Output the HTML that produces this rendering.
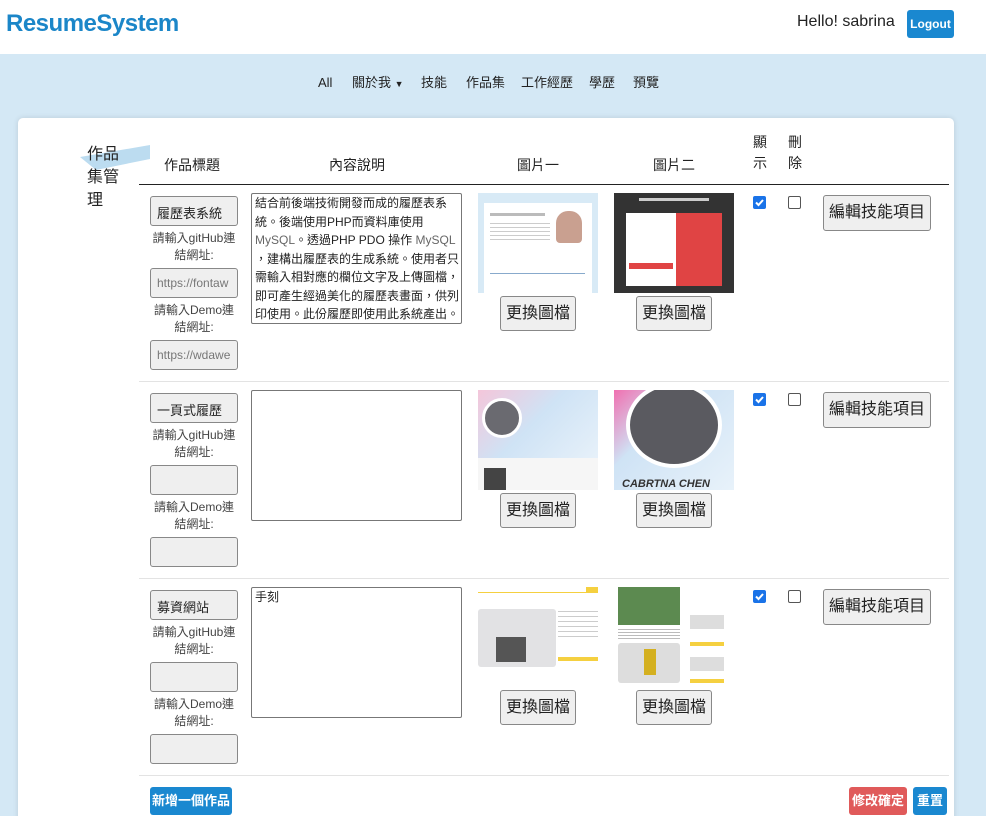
<!DOCTYPE html>
<html><head><meta charset="utf-8">
<style>
*{box-sizing:border-box;margin:0;padding:0}
html,body{width:986px;height:816px;overflow:hidden}
body{background:#d4e8f5;font-family:"Liberation Sans","Noto Sans CJK TC",sans-serif;position:relative;color:#222}
.a{position:absolute}
#hdr{left:0;top:0;width:986px;height:54px;background:#fff}
.logo{left:6px;top:10px;font-size:24px;line-height:28px;font-weight:bold;color:#1b86c8;letter-spacing:-0.5px}
.hello{left:797px;top:13px;font-size:16px;color:#222}
.btnb{background:#1a88d0;color:#fff;border-radius:3px;font-weight:bold;font-size:12px;text-align:center}
.nav{top:74px;font-size:13px;line-height:17px;color:#222}
#card{left:18px;top:118px;width:936px;height:720px;background:#fff;border-radius:5px;box-shadow:0 0 6px rgba(0,0,0,.12)}
.th{font-size:14px;color:#222;text-align:center}
.inp{width:88px;height:30px;border:1px solid #888;border-radius:3px;background:#efefef;font-size:13px;color:#222;padding:6px 6px;overflow:hidden;white-space:nowrap}
.inp.u{color:#777;font-size:12px;padding-top:7px}
.lbl{width:100px;font-size:12px;color:#444;text-align:center;line-height:17px}
.ta{width:211px;height:131px;border:1px solid #777;border-radius:2px;background:#fff;font-size:12px;line-height:18.5px;padding:0 3px;color:#222;overflow:hidden;white-space:nowrap}
.gbtn{width:76px;height:35px;border:1px solid #888;border-radius:3px;background:#efefef;font-size:16px;text-align:center;line-height:33px;color:#222}
.ebtn{width:108px;height:36px;border:1px solid #888;border-radius:3px;background:#efefef;font-size:16px;text-align:center;line-height:34px;color:#222}
.cb{width:13px;height:13px;border:1px solid #555;border-radius:2px;background:#fff}
.line{height:1px;background:#e3e3e3;left:139px;width:810px}
.img{width:120px;height:100px;overflow:hidden}
</style></head><body>
<div id="hdr" class="a"></div>
<div class="a logo">ResumeSystem</div>
<div class="a hello">Hello! sabrina</div>
<div class="a btnb" style="left:907px;top:10px;width:47px;height:28px;line-height:28px">Logout</div>

<div class="a nav" style="left:318px">All</div>
<div class="a nav" style="left:352px">關於我 <span style="font-size:9px">▼</span></div>
<div class="a nav" style="left:421px">技能</div>
<div class="a nav" style="left:466px">作品集</div>
<div class="a nav" style="left:521px">工作經歷</div>
<div class="a nav" style="left:589px">學歷</div>
<div class="a nav" style="left:633px">預覽</div>

<div id="card" class="a"></div>
<svg class="a" style="left:78px;top:143px" width="75" height="30"><polygon points="2,14 72,2 72,16 18,27" fill="#bcdcf0"/></svg>
<div class="a" style="left:87px;top:143px;width:36px;font-size:16px;line-height:23px;color:#222">作品集管理</div>

<div class="a th" style="left:142px;top:155px;width:100px">作品標題</div>
<div class="a th" style="left:307px;top:155px;width:100px">內容說明</div>
<div class="a th" style="left:488px;top:155px;width:100px">圖片一</div>
<div class="a th" style="left:624px;top:155px;width:100px">圖片二</div>
<div class="a th" style="left:752px;top:132px;width:16px;line-height:21px">顯示</div>
<div class="a th" style="left:787px;top:132px;width:16px;line-height:21px">刪除</div>
<div class="a" style="left:139px;top:184px;width:810px;height:1px;background:#222"></div>

<!-- row 1 -->
<div class="a inp" style="left:150px;top:196px">履歷表系統</div>
<div class="a lbl" style="left:144px;top:230px">請輸入gitHub連<br>結網址:</div>
<div class="a inp u" style="left:150px;top:268px">https://fontaw</div>
<div class="a lbl" style="left:144px;top:302px">請輸入Demo連<br>結網址:</div>
<div class="a inp u" style="left:150px;top:340px">https://wdawe</div>
<div class="a ta" style="left:251px;top:193px">結合前後端技術開發而成的履歷表系<br>統。後端使用PHP而資料庫使用<br><span style="color:#666">MySQL</span>。透過PHP PDO 操作 <span style="color:#666">MySQL</span><br>，建構出履歷表的生成系統。使用者只<br>需輸入相對應的欄位文字及上傳圖檔，<br>即可產生經過美化的履歷表畫面，供列<br>印使用。此份履歷即使用此系統產出。</div>
<div class="a img" style="left:478px;top:193px;background:#d8eaf6">
  <div class="a" style="left:6px;top:10px;width:108px;height:90px;background:#fff"></div>
  <div class="a" style="left:78px;top:18px;width:26px;height:32px;border-radius:12px 12px 4px 4px;background:#c9a090"></div>
  <div class="a" style="left:12px;top:20px;width:55px;height:3px;background:#bbb"></div>
  <div class="a" style="left:12px;top:30px;width:60px;height:18px;background:repeating-linear-gradient(#ccc 0 1px,#fff 1px 4px)"></div>
  <div class="a" style="left:12px;top:80px;width:95px;height:1px;background:#8ac"></div>
</div>
<div class="a gbtn" style="left:500px;top:296px">更換圖檔</div>
<div class="a img" style="left:614px;top:193px;background:#333">
  <div class="a" style="left:12px;top:20px;width:50px;height:73px;background:#fff"></div>
  <div class="a" style="left:62px;top:20px;width:46px;height:73px;background:#e04444"></div>
  <div class="a" style="left:15px;top:70px;width:44px;height:6px;background:#e04444"></div>
  <div class="a" style="left:25px;top:5px;width:70px;height:3px;background:#ccc"></div>
</div>
<div class="a gbtn" style="left:636px;top:296px">更換圖檔</div>
<svg class="a" style="left:753px;top:196px" width="13" height="13"><rect width="13" height="13" rx="2" fill="#1a73e8"/><path d="M3 6.5l2.5 2.5 4.5-5" stroke="#fff" stroke-width="2" fill="none"/></svg>
<div class="a cb" style="left:788px;top:196px"></div>
<div class="a ebtn" style="left:823px;top:195px">編輯技能項目</div>
<div class="a line" style="top:381px"></div>

<!-- row 2 -->
<div class="a inp" style="left:150px;top:393px">一頁式履歷</div>
<div class="a lbl" style="left:144px;top:427px">請輸入gitHub連<br>結網址:</div>
<div class="a inp" style="left:150px;top:465px"></div>
<div class="a lbl" style="left:144px;top:499px">請輸入Demo連<br>結網址:</div>
<div class="a inp" style="left:150px;top:537px"></div>
<div class="a ta" style="left:251px;top:390px"></div>
<div class="a img" style="left:478px;top:390px;background:linear-gradient(135deg,#f4c6da,#cfe3f5 40%,#eef5fb)">
  <div class="a" style="left:4px;top:8px;width:40px;height:40px;border-radius:50%;background:#6a6a70;border:3px solid #fff"></div>
  <div class="a" style="left:0;top:68px;width:120px;height:32px;background:#f6f6f6"></div>
  <div class="a" style="left:6px;top:78px;width:22px;height:22px;background:#444"></div>
</div>
<div class="a gbtn" style="left:500px;top:493px">更換圖檔</div>
<div class="a img" style="left:614px;top:390px;background:linear-gradient(135deg,#f070b0,#cfe3f5 35%,#e8f2fa)">
  <div class="a" style="left:12px;top:-8px;width:96px;height:86px;border-radius:50%;background:#5a5a60;border:4px solid #fff"></div>
  <div class="a" style="left:8px;top:88px;width:100px;height:12px;color:#333;font-size:11px;font-style:italic;font-weight:bold">CABRTNA CHEN</div>
</div>
<div class="a gbtn" style="left:636px;top:493px">更換圖檔</div>
<svg class="a" style="left:753px;top:393px" width="13" height="13"><rect width="13" height="13" rx="2" fill="#1a73e8"/><path d="M3 6.5l2.5 2.5 4.5-5" stroke="#fff" stroke-width="2" fill="none"/></svg>
<div class="a cb" style="left:788px;top:393px"></div>
<div class="a ebtn" style="left:823px;top:392px">編輯技能項目</div>
<div class="a line" style="top:578px"></div>

<!-- row 3 -->
<div class="a inp" style="left:150px;top:590px">募資網站</div>
<div class="a lbl" style="left:144px;top:624px">請輸入gitHub連<br>結網址:</div>
<div class="a inp" style="left:150px;top:662px"></div>
<div class="a lbl" style="left:144px;top:696px">請輸入Demo連<br>結網址:</div>
<div class="a inp" style="left:150px;top:734px"></div>
<div class="a ta" style="left:251px;top:587px">手刻</div>
<div class="a img" style="left:478px;top:587px;background:#fff">
  <div class="a" style="left:0;top:5px;width:120px;height:1px;background:#f5d040"></div>
  <div class="a" style="left:108px;top:0;width:12px;height:5px;background:#f5d040"></div>
  <div class="a" style="left:0;top:22px;width:78px;height:58px;background:#e2e2e4;border-radius:3px"></div>
  <div class="a" style="left:18px;top:50px;width:30px;height:25px;background:#555"></div>
  <div class="a" style="left:80px;top:24px;width:40px;height:30px;background:repeating-linear-gradient(#ccc 0 1px,#fff 1px 5px)"></div>
  <div class="a" style="left:80px;top:70px;width:40px;height:4px;background:#f5d040"></div>
</div>
<div class="a gbtn" style="left:500px;top:690px">更換圖檔</div>
<div class="a img" style="left:614px;top:587px;background:#fff">
  <div class="a" style="left:4px;top:0;width:62px;height:38px;background:#5c8a50"></div>
  <div class="a" style="left:4px;top:42px;width:62px;height:10px;background:repeating-linear-gradient(#bbb 0 1px,#fff 1px 3px)"></div>
  <div class="a" style="left:4px;top:56px;width:62px;height:40px;background:#ddd;border-radius:3px"></div>
  <div class="a" style="left:30px;top:62px;width:12px;height:26px;background:#d4b020"></div>
  <div class="a" style="left:76px;top:28px;width:34px;height:14px;background:#ddd"></div>
  <div class="a" style="left:76px;top:55px;width:34px;height:4px;background:#f5d040"></div>
  <div class="a" style="left:76px;top:70px;width:34px;height:14px;background:#ddd"></div>
  <div class="a" style="left:76px;top:92px;width:34px;height:4px;background:#f5d040"></div>
</div>
<div class="a gbtn" style="left:636px;top:690px">更換圖檔</div>
<svg class="a" style="left:753px;top:590px" width="13" height="13"><rect width="13" height="13" rx="2" fill="#1a73e8"/><path d="M3 6.5l2.5 2.5 4.5-5" stroke="#fff" stroke-width="2" fill="none"/></svg>
<div class="a cb" style="left:788px;top:590px"></div>
<div class="a ebtn" style="left:823px;top:589px">編輯技能項目</div>
<div class="a line" style="top:775px"></div>

<div class="a btnb" style="left:150px;top:787px;width:82px;height:28px;line-height:28px;font-size:13px">新增一個作品</div>
<div class="a btnb" style="left:849px;top:787px;width:58px;height:28px;line-height:28px;font-size:13px;background:#e05a5a">修改確定</div>
<div class="a btnb" style="left:913px;top:787px;width:34px;height:28px;line-height:28px;font-size:13px">重置</div>
</body></html>
